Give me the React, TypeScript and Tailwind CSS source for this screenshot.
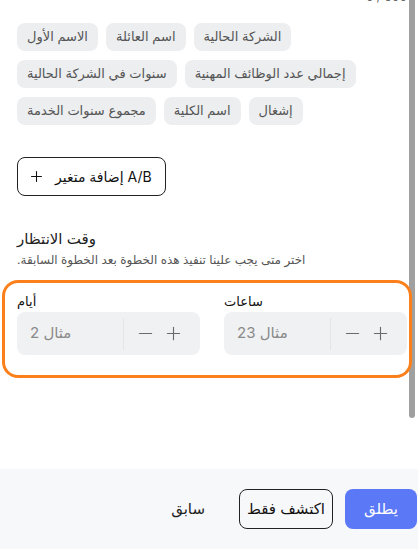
import { Plus, Minus } from "lucide-react";

const CHIPS = [
  "الشركة الحالية",
  "اسم العائلة",
  "الاسم الأول",
  "إجمالي عدد الوظائف المهنية",
  "سنوات في الشركة الحالية",
  "إشغال",
  "اسم الكلية",
  "مجموع سنوات الخدمة",
];

function Stepper({ label, placeholder }: { label: string; placeholder: string }) {
  return (
    <div className="flex w-[183px] flex-col">
      <div dir="rtl" className="h-[21px] text-left text-[13px] leading-[20px] text-[#111]">
        {label}
      </div>
      <div className="flex h-[43px] items-center rounded-lg bg-[#f0f1f3]">
        <div dir="rtl" className="flex-1 pl-[13px] text-left text-[15px] text-[#8a8a8a]">
          {placeholder}
        </div>
        <div className="flex h-[32px] w-[77px] items-center border-l border-[#e4e5e8] pl-[11px] text-[#6b6b6b]">
          <Minus size={21} strokeWidth={1.3} />
          <Plus size={21} strokeWidth={1.3} className="ml-[7px]" />
        </div>
      </div>
    </div>
  );
}

export default function App() {
  return (
    <div
      className="relative flex h-[549px] w-[418px] flex-col overflow-hidden bg-white"
      style={{ fontFamily: 'Inter, "DejaVu Sans", sans-serif' }}
    >
      <div className="flex flex-1">
        <div className="flex-1 pl-[17px]">
          <div className="-mt-[10px] h-[14px] pr-[2px] text-right text-[12px] leading-[14px] text-[#666]">
            0 / 500
          </div>

          <div dir="rtl" className="mt-[19px] flex w-[340px] flex-wrap justify-end gap-x-2 gap-y-[9px]">
            {CHIPS.map((chip) => (
              <span
                key={chip}
                className="flex h-[28px] items-center rounded-lg bg-[#eceef0] px-[10px] text-[13px] text-[#555]"
              >
                {chip}
              </span>
            ))}
          </div>

          <button className="mt-[32px] flex h-[39px] w-[149px] items-center rounded-lg border border-[#222] pl-[10px] text-[#111]">
            <Plus size={17} strokeWidth={1.5} />
            <span dir="rtl" className="ml-[10px] text-[14px]">
              A/B إضافة متغير
            </span>
          </button>

          <div dir="rtl" className="mt-[33px] text-left text-[15px] leading-[20px] text-[#222]">
            وقت الانتظار
          </div>
          <div dir="rtl" className="mt-[3px] text-left text-[12px] leading-[16px] text-[#555]">
            اختر متى يجب علينا تنفيذ هذه الخطوة بعد الخطوة السابقة.
          </div>

          <div className="relative mt-[23px] flex gap-[24px]">
            <div className="pointer-events-none absolute -top-[11px] -left-[15px] h-[98px] w-[410px] rounded-[16px] border-[3px] border-[#fb801c]" />
            <Stepper label="أيام" placeholder="مثال 2" />
            <Stepper label="ساعات" placeholder="مثال 23" />
          </div>
        </div>
        <div className="mr-[3px] h-[418px] w-[6px] rounded-b-[3px] bg-[#a0a0a0]" />
      </div>

      <div className="flex h-[80px] items-center justify-end gap-3 bg-[#f7f8fa] pr-[1px]">
        <button className="mr-[22px] text-[15px] text-[#222]">سابق</button>
        <button className="h-[40px] w-[94px] rounded-lg border border-[#222] text-[15px] text-[#111]">
          اكتشف فقط
        </button>
        <button className="h-[40px] w-[72px] rounded-lg bg-[#5b78f6] text-[15px] text-white">
          يطلق
        </button>
      </div>
    </div>
  );
}
